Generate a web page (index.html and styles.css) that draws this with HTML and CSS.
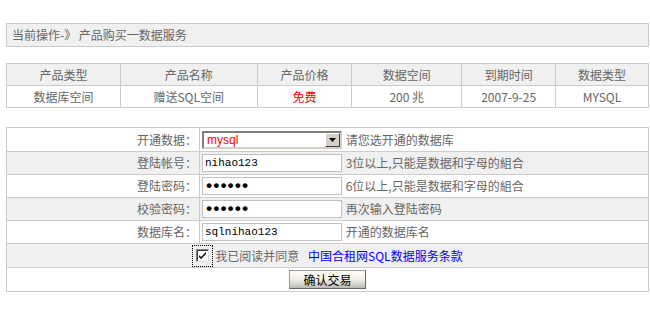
FILE: index.html
```html
<!DOCTYPE html>
<html lang="zh-CN">
<head>
    <meta charset="UTF-8">
    <title>产品购买一数据服务</title>
    <link rel="stylesheet" href="styles.css">
</head>
<body>
    <div class="page">
        <div class="crumb">当前操作-》 产品购买一数据服务</div>

        <table class="product">
            <colgroup>
                <col class="c-type">
                <col class="c-name">
                <col class="c-price">
                <col class="c-space">
                <col class="c-date">
                <col class="c-db">
            </colgroup>
            <tr class="head">
                <th>产品类型</th>
                <th>产品名称</th>
                <th>产品价格</th>
                <th>数据空间</th>
                <th>到期时间</th>
                <th>数据类型</th>
            </tr>
            <tr>
                <td>数据库空间</td>
                <td>赠送SQL空间</td>
                <td class="free">免费</td>
                <td>200 兆</td>
                <td>2007-9-25</td>
                <td>MYSQL</td>
            </tr>
        </table>

        <form class="order" onsubmit="return false">
            <table class="form">
                <tr class="tall">
                    <td class="label">开通数据：</td>
                    <td class="field">
                        <span class="select">
                            <select name="dbtype">
                                <option>mysql</option>
                            </select>
                            <span class="arrow">
                                <svg width="7" height="4" viewBox="0 0 7 4"><path d="M0 0h7L3.5 4z" fill="#000"/></svg>
                            </span>
                        </span>
                        <span class="hint">请您选开通的数据库</span>
                    </td>
                </tr>
                <tr class="alt">
                    <td class="label">登陆帐号：</td>
                    <td class="field">
                        <input class="text" type="text" value="nihao123">
                        <span class="hint">3位以上,只能是数据和字母的組合</span>
                    </td>
                </tr>
                <tr>
                    <td class="label">登陆密码：</td>
                    <td class="field">
                        <input class="text pass" type="password" value="123456">
                        <span class="hint">6位以上,只能是数据和字母的組合</span>
                    </td>
                </tr>
                <tr class="alt">
                    <td class="label">校验密码：</td>
                    <td class="field">
                        <input class="text pass" type="password" value="123456">
                        <span class="hint">再次输入登陆密码</span>
                    </td>
                </tr>
                <tr>
                    <td class="label">数据库名：</td>
                    <td class="field">
                        <input class="text" type="text" value="sqlnihao123">
                        <span class="hint">开通的数据库名</span>
                    </td>
                </tr>
                <tr class="alt tall">
                    <td class="agree" colspan="2">
                        <label class="agree-label">
                            <span class="focus">
                                <span class="check">
                                    <svg width="9" height="9" viewBox="0 0 9 9"><path d="M1 4l2 2 5-5v2l-5 5-2-2z" fill="#000"/></svg>
                                </span>
                            </span>
                            <span class="hint">我已阅读并同意</span>
                        </label>
                        <a class="terms" href="#">中国合租网SQL数据服务条款</a>
                    </td>
                </tr>
                <tr class="tall">
                    <td class="submit" colspan="2">
                        <button type="submit">确认交易</button>
                    </td>
                </tr>
            </table>
        </form>
    </div>
</body>
</html>
```

FILE: styles.css
```css
body {
    margin: 0;
    background: #fff;
    font-family: "Noto Sans CJK SC", "Liberation Sans", sans-serif;
    font-size: 12px;
    color: #666;
}
.page {
    width: 643px;
    padding: 23px 0 0 6px;
}
.crumb {
    height: 22px;
    line-height: 22px;
    padding-left: 5px;
    background: #f0f0f0;
    border: 1px solid #ccc;
}
table {
    width: 100%;
    border-collapse: collapse;
    border: 1px solid #ccc;
}
td, th {
    border: 1px solid #ccc;
    padding: 0;
    font-weight: normal;
    line-height: 16px;
}
.product {
    margin-top: 16px;
}
.product td, .product th {
    height: 21px;
    text-align: center;
}
.product .head {
    background: #f0f0f0;
}
.c-type { width: 114px; }
.c-name { width: 137px; }
.c-price { width: 95px; }
.c-space { width: 110px; }
.c-date { width: 94px; }
.c-db { width: 93px; }
.free {
    color: #f00;
}
.form {
    margin-top: 19px;
}
.form td {
    height: 22px;
}
.form .tall td {
    height: 23px;
}
.form .alt {
    background: #f0f0f0;
}
.label {
    width: 190px;
    padding-right: 2px;
    text-align: right;
}
.field {
    padding-left: 2px;
    white-space: nowrap;
}
.field > * {
    vertical-align: middle;
}
.text {
    box-sizing: border-box;
    width: 140px;
    height: 18px;
    margin: 0;
    padding: 0 2px;
    border: 1px solid #c0c0c0;
    background: #fff;
    color: #000;
    font-family: "Liberation Mono", monospace;
    font-size: 11px;
}
.pass {
    font-size: 17px;
    font-weight: bold;
    letter-spacing: -3px;
    padding-left: 1px;
}
.select {
    box-sizing: border-box;
    display: inline-flex;
    width: 140px;
    height: 18px;
    border: 2px inset #d4d0c8;
    background: #fff;
}
.select select {
    flex: 1;
    min-width: 0;
    height: 14px;
    margin: 0;
    padding: 0 3px;
    border: none;
    outline: none;
    background: transparent;
    color: #f00;
    font-family: "Liberation Sans", sans-serif;
    font-size: 12px;
    line-height: 14px;
    appearance: none;
    -webkit-appearance: none;
}
.arrow {
    box-sizing: border-box;
    display: flex;
    align-items: center;
    justify-content: center;
    width: 15px;
    height: 14px;
    background: #d4d0c8;
    border: 1px solid;
    border-color: #fff #404040 #404040 #fff;
}
.hint {
    margin-left: 1px;
}
.agree {
    text-align: center;
    white-space: nowrap;
}
.agree-label {
    display: inline-flex;
    align-items: center;
    vertical-align: middle;
}
.focus {
    display: inline-flex;
    align-items: center;
    justify-content: center;
    box-sizing: border-box;
    width: 21px;
    height: 22px;
    border: 1px dotted #000;
    margin-right: 2px;
}
.check {
    box-sizing: border-box;
    display: flex;
    align-items: center;
    justify-content: center;
    width: 13px;
    height: 13px;
    background: #fff;
    border: 1px solid #808080;
    border-right-color: #ddd;
    border-bottom-color: #ddd;
    box-shadow: inset 1px 1px 0 #404040;
}
.agree-label .hint {
    margin-left: 0;
}
.terms {
    margin-left: 6px;
    color: #00f;
    text-decoration: none;
    vertical-align: middle;
}
.submit {
    text-align: center;
}
button {
    box-sizing: border-box;
    width: 77px;
    height: 19px;
    margin: 0;
    padding: 0;
    border: 1px solid #999;
    border-right-color: #666;
    border-bottom-color: #666;
    background: linear-gradient(#fffdf0 0%, #f4f2e8 45%, #d8d8d0 75%, #b8b8b0 100%);
    color: #000;
    font-family: "Noto Sans CJK SC", sans-serif;
    font-size: 12px;
    line-height: 16px;
    vertical-align: middle;
}
```
